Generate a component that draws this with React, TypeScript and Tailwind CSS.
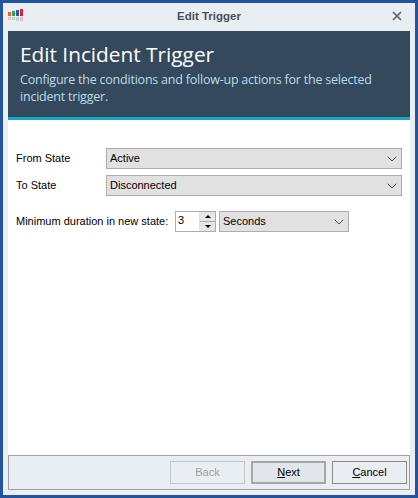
import { ChevronDown, X } from 'lucide-react';

const sans = "font-['Liberation_Sans',Arial,sans-serif]";

function Combo({ label, className }: { label: string; className: string }) {
  return (
    <div className={`flex h-[21px] items-center justify-between border border-[#adadad] bg-[#e1e1e1] pl-[3px] pr-[1px] text-[11px] text-black ${className}`}>
      <span>{label}</span>
      <ChevronDown size={16} strokeWidth={1.3} className="text-[#333]" />
    </div>
  );
}

function Logo() {
  return (
    <svg width="16" height="13" viewBox="0 0 16 13" className="shrink-0">
      <rect x="0" y="3" width="3" height="4" fill="#e0662c" />
      <rect x="4" y="2" width="3" height="5" fill="#2f9e57" />
      <rect x="8" y="1" width="3" height="6" fill="#2a5ca8" />
      <rect x="12" y="0" width="3" height="7" fill="#d8232a" />
      <rect x="0" y="8" width="3" height="3" fill="#f0c0a8" />
      <rect x="4" y="8" width="3" height="3" fill="#b5dcc2" />
      <rect x="8" y="8" width="3" height="4" fill="#bccde6" />
      <rect x="12" y="8" width="3" height="4" fill="#f0b8ba" />
    </svg>
  );
}

function FooterButton({ hot, rest, state }: { hot?: string; rest: string; state: 'disabled' | 'default' | 'normal' }) {
  const look =
    state === 'disabled'
      ? 'border border-[#c4c8cc] text-[#a0a0a0]'
      : state === 'default'
      ? 'border-2 border-[#a6a6a6] bg-[#e1e6ea] text-black'
      : 'border border-[#8a8a8a] text-black';
  return (
    <div className={`flex h-[23px] w-[75px] items-center justify-center text-[11px] ${look}`}>
      {hot && <span className="underline">{hot}</span>}
      {rest}
    </div>
  );
}

export default function App() {
  return (
    <div className={`flex h-[498px] w-[418px] flex-col border-[3px] border-[#25549f] bg-[#e9eef3] ${sans}`}>
      {/* Title bar */}
      <div className="flex h-[28px] shrink-0 items-center pl-[5px] pr-[11px]">
        <div className="-mt-[3px]"><Logo /></div>
        <div className="flex-1 pl-[4px] text-center text-[11.5px] font-bold text-[#4a4f55]">Edit Trigger</div>
        <X size={14} strokeWidth={3} className="-mt-[2px] text-[#5f6368]" />
      </div>

      <div className="flex flex-1 flex-col px-[5px] pb-[5px]">
        {/* Header */}
        <div className="h-[89px] shrink-0 border-b-[3px] border-[#17a9c4] bg-[#34495c] pl-[12px] pt-[8px] font-['Open_Sans',sans-serif]">
          <div className="text-[20.8px] leading-[30px] text-white">Edit Incident Trigger</div>
          <div className="mt-[2px] w-[375px] text-[12.5px] leading-[17px] tracking-[-0.22px] text-[#b9dcec]">
            Configure the conditions and follow-up actions for the selected incident trigger.
          </div>
        </div>

        {/* Form */}
        <div className="flex flex-1 flex-col bg-white px-[8px] pt-[28px]">
          <div className="flex flex-col gap-[6px]">
            <div className="flex items-center">
              <span className="w-[90px] text-[11px] text-black">From State</span>
              <Combo label="Active" className="w-[296px]" />
            </div>
            <div className="flex items-center">
              <span className="w-[90px] text-[11px] text-black">To State</span>
              <Combo label="Disconnected" className="w-[296px]" />
            </div>
          </div>
          <div className="mt-[15px] flex items-center">
            <span className="w-[159px] whitespace-nowrap text-[11px] text-black">Minimum duration in new state:</span>
            <div className="flex h-[21px] w-[41px] items-center border border-[#adadad] bg-white pl-[2px] text-[11px] text-black">
              <span className="-mt-[2px] flex-1">3</span>
              <div className="flex h-full w-[16px] flex-col border-l border-[#e0e0e0]">
                <div className="flex flex-1 items-center justify-center bg-[#e6e6e6]">
                  <div className="h-0 w-0 border-x-[3px] border-b-[3px] border-x-transparent border-b-black" />
                </div>
                <div className="flex flex-1 items-center justify-center border-t border-[#a8a8a8] bg-[#e6e6e6]">
                  <div className="h-0 w-0 border-x-[3px] border-t-[3px] border-x-transparent border-t-black" />
                </div>
              </div>
            </div>
            <Combo label="Seconds" className="ml-[3px] w-[130px]" />
          </div>
        </div>

        {/* Footer */}
        <div className="flex h-[35px] shrink-0 items-center justify-end gap-[6px] border border-[#9ea2a6] pr-[2px]">
          <FooterButton rest="Back" state="disabled" />
          <FooterButton hot="N" rest="ext" state="default" />
          <FooterButton hot="C" rest="ancel" state="normal" />
        </div>
      </div>
    </div>
  );
}
